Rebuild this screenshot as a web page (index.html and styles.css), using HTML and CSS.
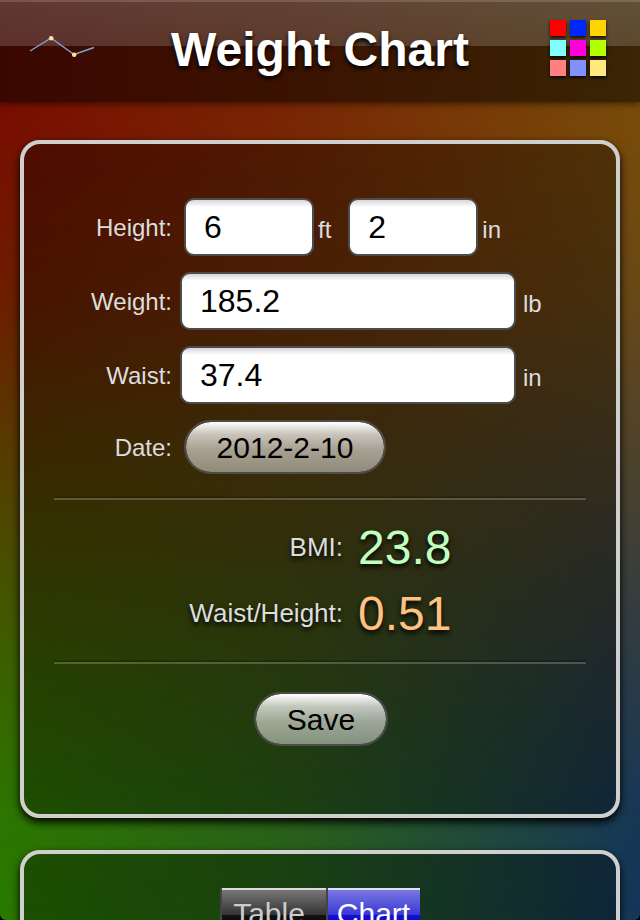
FILE: index.html
```html
<!DOCTYPE html>
<html lang="en">
<head>
  <meta charset="UTF-8">
  <meta name="viewport" content="width=device-width, initial-scale=1.0">
  <title>Weight Chart</title>
  <link rel="stylesheet" href="styles.css">
</head>
<body>
  <div class="screen">
    <header class="header">
      <svg class="logo" width="68" height="28" viewBox="0 0 68 28">
        <polyline points="2,17 23,4 46,20.5 66,13.5" fill="none" stroke="#7fa8d8" stroke-width="1.4"/>
        <circle cx="23.2" cy="4.2" r="2.3" fill="#ffe0a0"/>
        <circle cx="46.2" cy="20.7" r="2.3" fill="#ffe0a0"/>
      </svg>
      <h1>Weight Chart</h1>
      <div class="swatches">
        <i class="red"></i><i class="blue"></i><i class="gold"></i>
        <i class="cyan"></i><i class="magenta"></i><i class="lime"></i>
        <i class="pink"></i><i class="periwinkle"></i><i class="cream"></i>
      </div>
    </header>

    <section class="panel entry">
      <div class="row">
        <label for="feet">Height:</label>
        <input class="field small" id="feet" type="text" value="6">
        <span class="unit near">ft</span>
        <input class="field small inches" id="inches" type="text" value="2">
        <span class="unit near">in</span>
      </div>
      <div class="row">
        <label for="weight">Weight:</label>
        <input class="field" id="weight" type="text" value="185.2">
        <span class="unit">lb</span>
      </div>
      <div class="row">
        <label for="waist">Waist:</label>
        <input class="field" id="waist" type="text" value="37.4">
        <span class="unit">in</span>
      </div>
      <div class="row date-row">
        <label for="date">Date:</label>
        <button class="pill date" id="date">2012-2-10</button>
      </div>
      <div class="results">
        <div class="result"><span class="name">BMI:</span><span class="value good">23.8</span></div>
        <div class="result"><span class="name">Waist/Height:</span><span class="value warn">0.51</span></div>
      </div>
      <div class="actions">
        <button class="pill save">Save</button>
      </div>
    </section>

    <section class="panel history">
      <div class="tabs">
        <button class="tab">Table</button>
        <button class="tab active">Chart</button>
      </div>
    </section>
  </div>
</body>
</html>
```

FILE: styles.css
```css
* { box-sizing: border-box; }
html { background: #000; }
body { margin: 0; font-family: "Liberation Sans", Arial, sans-serif; color: #ddd; }

/* four-corner background: bottom colours, with the top colours fading out over them */
.screen { position: relative; height: 920px; overflow: hidden; border-radius: 0 0 6px 6px; background: linear-gradient(to right, #297a00, #27621a 45%, #14365a); }
.screen::before { content: ""; position: absolute; inset: 0; background: linear-gradient(to right, #780e00, #782604 45%, #774c0a); -webkit-mask-image: linear-gradient(#000 14%, rgba(0,0,0,.86) 32%, rgba(0,0,0,.57) 50%, rgba(0,0,0,.27) 70%, rgba(0,0,0,.04) 88%, transparent); mask-image: linear-gradient(#000 14%, rgba(0,0,0,.86) 32%, rgba(0,0,0,.57) 50%, rgba(0,0,0,.27) 70%, rgba(0,0,0,.04) 88%, transparent); }

.header { position: relative; height: 102px; display: flex; align-items: flex-start; justify-content: space-between; padding: 18px 34px 0 28px; background: linear-gradient(rgba(255,255,255,.2), rgba(255,255,255,.17)) 0 0 / 100% 44px no-repeat, rgba(0,0,0,.51); border-top: 2px solid rgba(255,255,255,.32); box-shadow: 0 2px 6px rgba(0,0,0,.5); }
.header h1 { margin: 0; font-size: 48px; line-height: 56px; padding: 2px 6px 0 0; color: #fff; text-shadow: 0 3px 4px #000; }
.logo { margin-top: 14px; }
.swatches { display: grid; grid-template-columns: repeat(3, 16px); grid-auto-rows: 16px; gap: 4px; }
.swatches i { box-shadow: 0 2px 3px rgba(0,0,0,.8); }
.red { background: #f00; }
.blue { background: #0026ff; }
.gold { background: #ffd400; }
.cyan { background: #80ffff; }
.magenta { background: #ff00dc; }
.lime { background: #b6ff00; }
.pink { background: #ff8080; }
.periwinkle { background: #8090ff; }
.cream { background: #ffe97f; }

.panel { position: relative; margin: 0 20px; padding: 0 30px; border: 4px solid #cfcfcd; border-radius: 20px; background: rgba(0,0,0,.33); background-clip: padding-box; box-shadow: 0 4px 8px #000; }
.entry { margin-top: 38px; height: 678px; padding-top: 54px; }
.history { margin-top: 32px; height: 300px; padding-top: 34px; }

.row { display: flex; align-items: center; height: 58px; margin-bottom: 16px; }
.row label { width: 118px; margin-right: 8px; padding-top: 1px; text-align: right; font-size: 24px; }
.field { width: 336px; height: 58px; margin: 0; padding: 1px 18px 0; border: 2px solid #4c4c4c; border-radius: 10px; background: linear-gradient(#d8d4d8, #fff 7px); font: 32px "Liberation Sans", Arial, sans-serif; color: #000; }
.small { width: 130px; margin-left: 4px; }
.inches { margin-left: 17px; }
.unit { margin-left: 7px; padding-top: 5px; font-size: 24px; }
.near { margin-left: 4px; }
.date-row { height: 54px; margin-bottom: 24px; }

.pill { height: 54px; padding: 2px 0 0; border: 2px solid #4c4c4c; border-radius: 27px; background: linear-gradient(#fff, rgba(255,255,255,.72) 25%, rgba(255,255,255,.56) 55%, rgba(255,255,255,.45)); background-clip: padding-box; font: 30px "Liberation Sans", Arial, sans-serif; color: #000; }
.date { width: 202px; margin-left: 4px; }
.save { width: 134px; }

.results { height: 166px; padding-top: 19px; border: solid rgba(255,255,255,.2); border-width: 2px 0; box-shadow: 0 -2px 2px -1px rgba(0,0,0,.35), inset 0 -2px 2px -1px rgba(0,0,0,.35); }
.result { display: flex; align-items: baseline; height: 66px; line-height: 58px; text-shadow: 0 3px 5px #000; }
.name { width: 289px; margin-right: 15px; text-align: right; font-size: 26px; position: relative; top: -8px; }
.value { font-size: 48px; }
.good { color: #c0ffc0; }
.warn { color: #ffc080; }
.actions { margin-top: 28px; text-align: center; padding-left: 2px; }

.tabs { display: flex; justify-content: center; }
.tab { width: 106px; height: 56px; padding: 0 10px 4px 0; border: 0 solid #444; border-left-width: 2px; background: linear-gradient(#ddd 2px, #777 2px, #333 27px, #111 27px, #000); font: 30px "Liberation Sans", Arial, sans-serif; color: #ccc; }
.active { width: 94px; padding-right: 1px; background: linear-gradient(#e0e0ff 2px, #7878e0 2px, #3838d4 27px, #1010d4 27px, #0000b0); color: #fff; }
```
